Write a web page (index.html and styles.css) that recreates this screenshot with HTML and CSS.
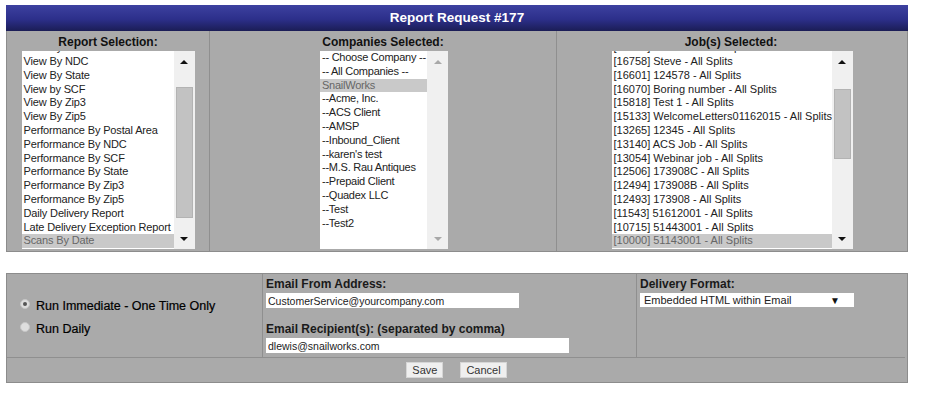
FILE: index.html
```html
<!DOCTYPE html>
<html lang="en">

<head>
    <meta charset="UTF-8">
    <meta name="viewport" content="width=device-width, initial-scale=1.0">
    <title>Report Request #177</title>
    <link rel="stylesheet" href="styles.css">
</head>

<body>
    <div class="report-page">
        <div class="title-bar">Report Request #177</div>

        <div class="selection-table">
            <div class="selection-cell">
                <div class="cell-heading">Report Selection:</div>
                <div class="listbox listbox-reports">
                    <ul class="options">
                        <li class="partial"><span>View By Postal Area</span></li>
                        <li>View By NDC</li>
                        <li>View By State</li>
                        <li>View by SCF</li>
                        <li>View By Zip3</li>
                        <li>View By Zip5</li>
                        <li>Performance By Postal Area</li>
                        <li>Performance By NDC</li>
                        <li>Performance By SCF</li>
                        <li>Performance By State</li>
                        <li>Performance By Zip3</li>
                        <li>Performance By Zip5</li>
                        <li>Daily Delivery Report</li>
                        <li>Late Delivery Exception Report</li>
                        <li class="selected">Scans By Date</li>
                    </ul>
                    <div class="scrollbar">
                        <span class="arrow arrow-up"></span>
                        <div class="track"><div class="thumb thumb-reports"></div></div>
                        <span class="arrow arrow-down"></span>
                    </div>
                </div>
            </div>

            <div class="selection-cell">
                <div class="cell-heading">Companies Selected:</div>
                <div class="listbox listbox-companies">
                    <ul class="options">
                        <li>-- Choose Company --</li>
                        <li>-- All Companies --</li>
                        <li class="selected">SnailWorks</li>
                        <li>--Acme, Inc.</li>
                        <li>--ACS Client</li>
                        <li>--AMSP</li>
                        <li>--Inbound_Client</li>
                        <li>--karen's test</li>
                        <li>--M.S. Rau Antiques</li>
                        <li>--Prepaid Client</li>
                        <li>--Quadex LLC</li>
                        <li>--Test</li>
                        <li>--Test2</li>
                    </ul>
                    <div class="scrollbar disabled">
                        <span class="arrow arrow-up"></span>
                        <div class="track"></div>
                        <span class="arrow arrow-down"></span>
                    </div>
                </div>
            </div>

            <div class="selection-cell">
                <div class="cell-heading">Job(s) Selected:</div>
                <div class="listbox listbox-jobs">
                    <ul class="options">
                        <li class="partial"><span>[17081] 56565001 - All Splits</span></li>
                        <li>[16758] Steve - All Splits</li>
                        <li>[16601] 124578 - All Splits</li>
                        <li>[16070] Boring number - All Splits</li>
                        <li>[15818] Test 1 - All Splits</li>
                        <li>[15133] WelcomeLetters01162015 - All Splits</li>
                        <li>[13265] 12345 - All Splits</li>
                        <li>[13140] ACS Job - All Splits</li>
                        <li>[13054] Webinar job - All Splits</li>
                        <li>[12506] 173908C - All Splits</li>
                        <li>[12494] 173908B - All Splits</li>
                        <li>[12493] 173908 - All Splits</li>
                        <li>[11543] 51612001 - All Splits</li>
                        <li>[10715] 51443001 - All Splits</li>
                        <li class="selected">[10000] 51143001 - All Splits</li>
                    </ul>
                    <div class="scrollbar">
                        <span class="arrow arrow-up"></span>
                        <div class="track"><div class="thumb thumb-jobs"></div></div>
                        <span class="arrow arrow-down"></span>
                    </div>
                </div>
            </div>
        </div>

        <div class="delivery-table">
            <div class="delivery-cell schedule-cell">
                <label class="radio-row">
                    <span class="radio checked"></span>
                    Run Immediate - One Time Only
                </label>
                <label class="radio-row">
                    <span class="radio"></span>
                    Run Daily
                </label>
            </div>

            <div class="delivery-cell email-cell">
                <label class="field-label" for="emailFrom">Email From Address:</label>
                <input type="text" id="emailFrom" class="text-field field-from" value="CustomerService@yourcompany.com">

                <label class="field-label label-recipients" for="emailTo">Email Recipient(s): (separated by comma)</label>
                <input type="text" id="emailTo" class="text-field field-to" value="dlewis@snailworks.com">
            </div>

            <div class="delivery-cell format-cell">
                <div class="field-label">Delivery Format:</div>
                <div class="fake-select">
                    <span>Embedded HTML within Email</span>
                    <span class="select-arrow">&#9660;</span>
                </div>
            </div>

            <div class="button-row">
                <button class="form-btn">Save</button>
                <button class="form-btn">Cancel</button>
            </div>
        </div>
    </div>
</body>

</html>
```

FILE: styles.css
```css
body {
    margin: 0;
    padding: 0;
    background: #fff;
    font-family: 'Liberation Sans', Arial, sans-serif;
    color: #1a1a1a;
}

.report-page {
    width: 902px;
    padding: 5px 0 0 6px;
}

.title-bar {
    height: 26px;
    line-height: 26px;
    text-align: center;
    color: #fff;
    font-weight: bold;
    font-size: 13.5px;
    background: linear-gradient(to bottom, #3d41a0, #2c2f8a 55%, #1b1d55);
}

/* top table with the three list boxes */

.selection-table {
    display: grid;
    grid-template-columns: 203px 347px 348px;
    background-color: #aaaaaa;
    border: 1px solid #8c8c8c;
    border-top: none;
}

.selection-cell {
    padding: 4px 0 2px;
    border-right: 1px solid #8f8f8f;
}

.selection-cell:last-child {
    border-right: none;
}

.cell-heading {
    font-size: 12px;
    font-weight: bold;
    line-height: 14px;
    text-align: center;
    color: #111;
    margin-bottom: 2px;
}

.listbox {
    display: flex;
    height: 198px;
    margin: 0 auto;
    background-color: #fff;
    overflow: hidden;
}

.listbox-reports {
    width: 173px;
}

.listbox-companies {
    width: 128px;
    position: relative;
    left: 1px;
}

.listbox-jobs {
    width: 241px;
    position: relative;
    left: 1px;
}

.options {
    flex: 1;
    list-style: none;
    margin: 0;
    padding: 0;
    font-size: 11px;
    line-height: 13.8px;
    color: #222;
    overflow: hidden;
    white-space: nowrap;
}

.listbox-reports .options {
    letter-spacing: -0.15px;
}

.listbox-companies .options {
    letter-spacing: -0.25px;
}

.options li {
    padding-left: 2px;
}

/* row scrolled mostly out of view, only its lower edge shows */
.options li.partial {
    height: 4px;
    overflow: hidden;
}

.options li.partial span {
    display: block;
    margin-top: -10px;
}

.options li.selected {
    background-color: #c9c9c9;
    color: #666;
}

.scrollbar {
    width: 21px;
    display: flex;
    flex-direction: column;
    background-color: #f0f0f0;
}

.arrow {
    height: 21px;
    display: flex;
    align-items: center;
    justify-content: center;
}

.arrow::after {
    content: "";
    border-left: 4px solid transparent;
    border-right: 4px solid transparent;
}

.arrow-up::after {
    border-bottom: 4px solid #111;
}

.arrow-down::after {
    border-top: 4px solid #111;
}

.scrollbar.disabled .arrow-up::after {
    border-bottom-color: #a8a8a8;
}

.scrollbar.disabled .arrow-down::after {
    border-top-color: #a8a8a8;
}

.track {
    flex: 1;
}

.thumb {
    margin: 0 2px;
    background-color: #c2c2c2;
    border: 1px solid #b3b3b3;
    box-sizing: border-box;
}

.thumb-reports {
    margin-top: 15px;
    height: 131px;
}

.thumb-jobs {
    margin-top: 17px;
    height: 70px;
}

/* bottom table with schedule and delivery settings */

.delivery-table {
    display: grid;
    grid-template-columns: 256px 374px 268px;
    grid-template-rows: 84px 24px;
    margin-top: 21px;
    background-color: #aaaaaa;
    border: 1px solid #8c8c8c;
}

.delivery-cell {
    border-right: 1px solid #8f8f8f;
    border-bottom: 1px solid #8f8f8f;
}

.format-cell {
    border-right: none;
}

.schedule-cell {
    display: flex;
    flex-direction: column;
    justify-content: center;
    gap: 5px;
    padding: 4px 0 0 13px;
}

.radio-row {
    display: flex;
    align-items: center;
    gap: 6px;
    font-size: 12.5px;
    line-height: 18px;
    color: #000;
    -webkit-text-stroke: 0.2px #000;
}

.radio {
    width: 10px;
    height: 10px;
    border-radius: 50%;
    background-color: #dedede;
    border: 1px solid #c6c6c6;
    box-sizing: border-box;
    position: relative;
    top: -2px;
    display: flex;
    align-items: center;
    justify-content: center;
}

.radio.checked::after {
    content: "";
    width: 4px;
    height: 4px;
    border-radius: 50%;
    background-color: #555;
}

.email-cell,
.format-cell {
    padding: 3px 0 0 3px;
}

.field-label {
    display: block;
    font-size: 12px;
    font-weight: bold;
    line-height: 15px;
    color: #1a1a1a;
}

.label-recipients {
    margin-top: 14px;
}

.text-field {
    display: block;
    height: 15px;
    border: none;
    padding: 0 2px;
    margin: 1px 0 0;
    font-family: 'Liberation Sans', Arial, sans-serif;
    font-size: 10.5px;
    color: #222;
    background: #fff;
    box-sizing: border-box;
    outline: none;
}

.field-from {
    width: 253px;
}

.field-to {
    width: 303px;
}

.fake-select {
    display: flex;
    justify-content: space-between;
    align-items: center;
    width: 214px;
    height: 14px;
    margin-top: 1px;
    padding: 0 14px 0 4px;
    box-sizing: border-box;
    background: #fff;
    font-size: 11px;
    color: #222;
}

.select-arrow {
    font-size: 10px;
    color: #111;
}

.button-row {
    grid-column: 1 / 4;
    display: flex;
    justify-content: center;
    align-items: center;
    gap: 17px;
    padding-left: 1px;
}

.form-btn {
    height: 16px;
    padding: 0 5px;
    font-family: 'Liberation Sans', Arial, sans-serif;
    font-size: 11px;
    color: #333;
    background-color: #efefef;
    border: 1px solid #d6d6d6;
    border-radius: 0;
    line-height: 14px;
}
```
